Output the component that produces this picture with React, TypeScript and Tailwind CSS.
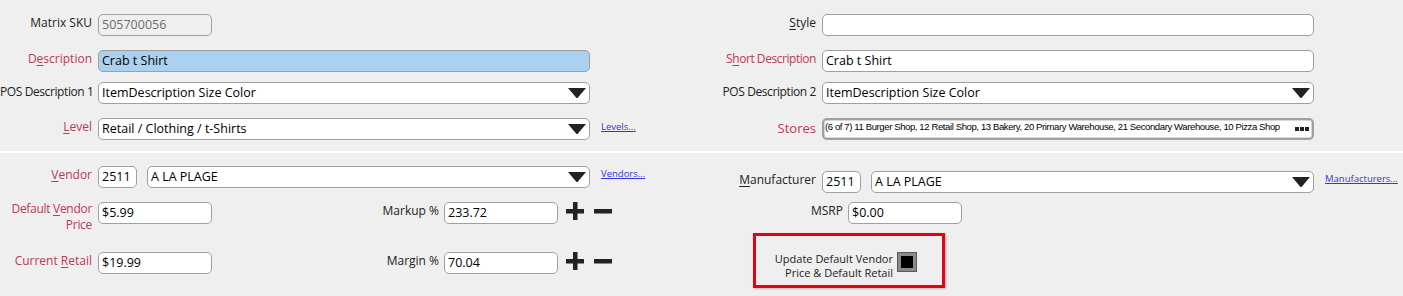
import React from "react"

const font = { fontFamily: '"Open Sans", "Noto Sans", sans-serif' }

function Caret() {
  return (
    <svg width="18" height="10" viewBox="0 0 18 10" className="shrink-0">
      <path d="M0 0 H18 L9.5 10 H8.5 Z" fill="#222" />
    </svg>
  )
}

function PlusMinus() {
  return (
    <div className="flex items-center gap-[10px] ml-[8px]">
      <svg width="18" height="18" viewBox="0 0 18 18">
        <rect x="7" y="0" width="4.5" height="18" fill="#222" />
        <rect x="0" y="7" width="18" height="4.5" fill="#222" />
      </svg>
      <svg width="18" height="18" viewBox="0 0 18 18">
        <rect x="0" y="7" width="18" height="4.5" fill="#222" />
      </svg>
    </div>
  )
}

function Label({ children, red, className = "" }: { children: React.ReactNode; red?: boolean; className?: string }) {
  return (
    <div
      className={`text-right text-[12px] leading-[16px] shrink-0 ${red ? "text-[#b83a55]" : "text-[#222]"} ${className}`}
    >
      {children}
    </div>
  )
}

function Field({
  value,
  w,
  select,
  className = "",
}: {
  value: string
  w: string
  select?: boolean
  className?: string
}) {
  return (
    <div
      className={`h-[22px] ${w} shrink-0 rounded-[5px] border border-[#a0a0a0] bg-white flex items-center pl-[3px] pr-[3px] text-[12.5px] text-black ${className}`}
    >
      <span className="flex-1 truncate">{value}</span>
      {select && <Caret />}
    </div>
  )
}

function LinkText({ children, className = "" }: { children: React.ReactNode; className?: string }) {
  return <span className={`text-[9.5px] text-[#3333ee] underline ${className}`}>{children}</span>
}

function U({ children }: { children: React.ReactNode }) {
  return <span className="underline underline-offset-2">{children}</span>
}

export default function App() {
  return (
    <div className="w-[1403px] h-[296px] bg-[#efefef] overflow-hidden" style={font}>
      {/* top section */}
      <div className="flex pt-[14px] h-[151px]">
        <div className="w-[702px] shrink-0 flex flex-col">
          <div className="flex items-start gap-[6px] h-[22px]">
            <Label className="w-[92px] pt-[1px]">Matrix SKU</Label>
            <Field value="505700056" w="w-[114px]" className="!bg-[#efefef] !text-[#6d6d6d]" />
          </div>
          <div className="flex items-start gap-[6px] h-[22px] mt-[14px]">
            <Label red className="w-[92px] pt-[1px]">
              D<U>e</U>scription
            </Label>
            <Field value="Crab t Shirt" w="w-[492px]" className="!bg-[#aad1f0]" />
          </div>
          <div className="flex items-start gap-[6px] h-[22px] mt-[10px]">
            <Label className="w-[92px] pt-[2px] whitespace-nowrap text-[10.5px] tracking-[-0.4px]">POS Description 1</Label>
            <Field value="ItemDescription Size Color" w="w-[492px]" select />
          </div>
          <div className="flex items-start gap-[6px] h-[22px] mt-[14px]">
            <Label red className="w-[92px] pt-[1px]">
              <U>L</U>evel
            </Label>
            <Field value="Retail / Clothing / t-Shirts" w="w-[492px]" select />
            <LinkText className="ml-[5px] mt-[2px]">Levels...</LinkText>
          </div>
        </div>
        <div className="flex-1 flex flex-col">
          <div className="flex items-start gap-[6px] h-[22px]">
            <Label className="w-[114px] pt-[1px]">
              <U>S</U>tyle
            </Label>
            <Field value="" w="w-[492px]" />
          </div>
          <div className="flex items-start gap-[6px] h-[22px] mt-[14px]">
            <Label red className="w-[114px] pt-[1px] tracking-[-0.45px] text-[11.5px]">
              S<U>h</U>ort Description
            </Label>
            <Field value="Crab t Shirt" w="w-[492px]" />
          </div>
          <div className="flex items-start gap-[6px] h-[22px] mt-[10px]">
            <Label className="w-[114px] pt-[2px] whitespace-nowrap text-[10.5px] tracking-[-0.4px]">POS Description 2</Label>
            <Field value="ItemDescription Size Color" w="w-[492px]" select />
          </div>
          <div className="flex items-start gap-[6px] h-[22px] mt-[14px]">
            <Label red className="w-[114px] pt-[2px] text-[13px]">
              Stores
            </Label>
            <div className="h-[22px] w-[492px] shrink-0 rounded-[5px] border-2 border-[#a0a0a0] bg-white flex items-center pl-[1px] pr-[2px] shadow-[inset_0_0_0_1px_#d8d8d8]">
              <span
                className="flex-1 truncate text-[9.5px] tracking-[-0.38px] text-black -mt-[3px]"
                style={{ fontFamily: '"Liberation Sans", sans-serif' }}
              >
                (6 of 7) 11 Burger Shop, 12 Retail Shop, 13 Bakery, 20 Primary Warehouse, 21 Secondary Warehouse, 10 Pizza Shop
              </span>
              <div className="flex gap-[1px] mr-[1px]">
                <span className="w-[4px] h-[4px] bg-[#222]" />
                <span className="w-[4px] h-[4px] bg-[#222]" />
                <span className="w-[4px] h-[4px] bg-[#222]" />
              </div>
            </div>
          </div>
        </div>
      </div>

      <div className="h-[2px] bg-white" />

      {/* bottom section */}
      <div className="flex">
        <div className="w-[702px] shrink-0 flex flex-col pt-[13px]">
          <div className="flex items-start h-[22px]">
            <Label red className="w-[92px] pt-[1px] text-[12.5px]">
              <U>V</U>endor
            </Label>
            <Field value="2511" w="w-[39px]" className="ml-[6px]" />
            <Field value="A LA PLAGE" w="w-[443px]" select className="ml-[10px]" />
            <LinkText className="ml-[11px] mt-[1px]">Vendors...</LinkText>
          </div>
          <div className="flex items-start h-[22px] mt-[14px]">
            <Label red className="w-[92px] text-[9.5px] leading-[15px] -mt-[1px] tracking-[-0.3px]">
              Default <U>V</U>endor
              <br />
              Price
            </Label>
            <Field value="$5.99" w="w-[114px]" className="ml-[6px]" />
            <Label className="w-[227px] pt-[1px] text-[12.5px]">Markup %</Label>
            <Field value="233.72" w="w-[114px]" className="ml-[5px]" />
            <PlusMinus />
          </div>
          <div className="flex items-start h-[22px] mt-[28px]">
            <Label red className="w-[92px] pt-[1px] text-[12.5px] whitespace-nowrap">
              Current <U>R</U>etail
            </Label>
            <Field value="$19.99" w="w-[114px]" className="ml-[6px]" />
            <Label className="w-[227px] pt-[1px] text-[12.5px]">Margin %</Label>
            <Field value="70.04" w="w-[114px]" className="ml-[5px]" />
            <PlusMinus />
          </div>
        </div>
        <div className="flex-1 flex flex-col pt-[18px]">
          <div className="flex items-start h-[22px]">
            <Label className="w-[114px] pt-[1px] text-[12.5px]">
              <U>M</U>anufacturer
            </Label>
            <Field value="2511" w="w-[39px]" className="ml-[6px]" />
            <Field value="A LA PLAGE" w="w-[443px]" select className="ml-[10px]" />
            <LinkText className="ml-[11px] mt-[1px]">Manufacturers...</LinkText>
          </div>
          <div className="flex items-start h-[22px] mt-[9px]">
            <Label className="w-[141px] pt-[1px] text-[12.5px]">MSRP</Label>
            <Field value="$0.00" w="w-[114px]" className="ml-[5px]" />
          </div>
          <div className="ml-[51px] mt-[9px] w-[192px] h-[55px] border-[3px] border-[#e60012] shadow-[1px_1px_2px_rgba(0,0,0,0.25)] flex items-start justify-end pr-[26px] pt-[16px]">
            <div className="text-right text-[11px] leading-[14px] text-[#222]">
              Update Default Vendor
              <br />
              Price &amp; Default Retail
            </div>
            <div className="ml-[5px] mt-[1px] w-[18px] h-[18px] border-[3px] border-[#8a8a8a] bg-black shadow-[0_0_0_1px_#5a5a5a]" />
          </div>
        </div>
      </div>
    </div>
  )
}
